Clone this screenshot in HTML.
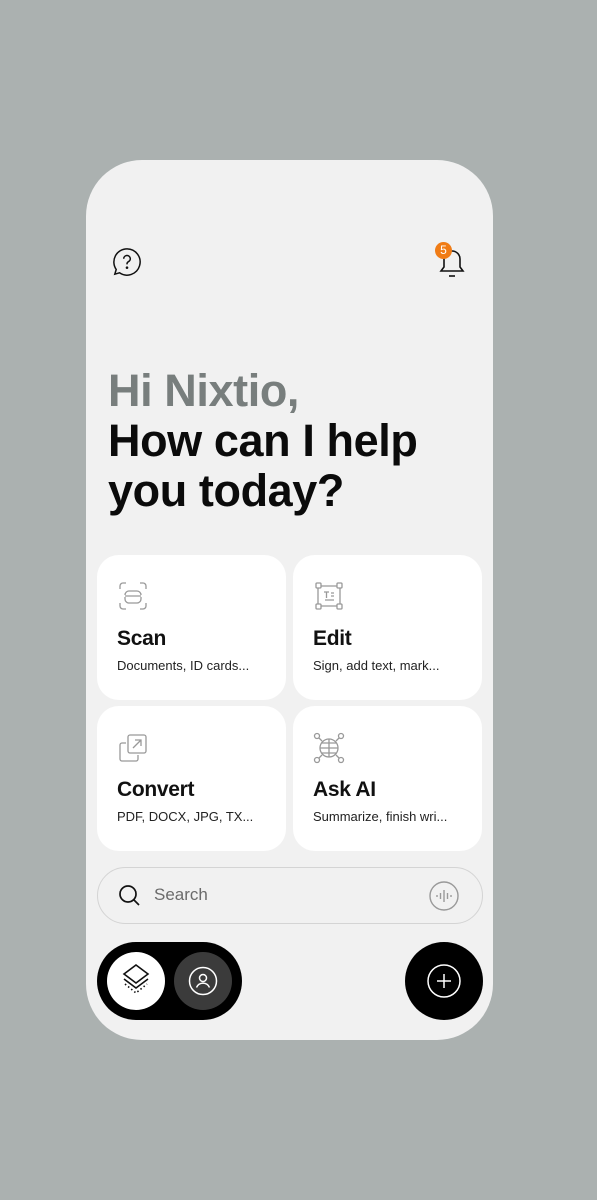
<!DOCTYPE html>
<html><head><style>
*{margin:0;padding:0;box-sizing:border-box}
body{width:597px;height:1200px;background:#abb1b0;font-family:"Liberation Sans",sans-serif;position:relative;overflow:hidden}
.phone{position:absolute;left:86px;top:160px;width:407px;height:880px;background:#f1f1f1;border-radius:56px}
.abs{position:absolute}
h1{position:absolute;left:108px;top:366px;font-size:45px;line-height:50px;font-weight:700;letter-spacing:-0.4px;color:#0b0b0b}
h1 span{color:#787e7d}
.card{position:absolute;width:189px;height:145px;background:#fff;border-radius:22px}
.card .t{position:absolute;left:20px;top:72px;font-size:21px;font-weight:700;letter-spacing:-0.3px;color:#111}
.card .s{position:absolute;left:20px;top:103px;font-size:13px;color:#222}
.card svg{position:absolute;left:20px;top:26px}
</style></head><body>
<div class="phone"></div>
<svg class="abs" style="left:112px;top:247px" width="30" height="30" viewBox="0 0 32 32" fill="none" stroke="#111" stroke-width="1.6"><path d="M16 2a14 14 0 1 1-8 25.5L3 29l1.5-5A14 14 0 0 1 16 2z"/><path d="M12.5 12.5a3.5 3.5 0 1 1 5 3.2c-1 .5-1.5 1.2-1.5 2.3v.5"/><circle cx="16" cy="22" r=".6" fill="#111"/></svg>
<svg class="abs" style="left:437px;top:244px" width="30" height="34" viewBox="0 0 30 34" fill="none" stroke="#111" stroke-width="1.6"><path d="M4 27h22l-3-4v-8a8 8 0 0 0-16 0v8z"/><path d="M12 32h6"/></svg>
<div class="abs" style="left:435px;top:242px;width:17px;height:17px;border-radius:50%;background:#f07c16;color:#fff;font-size:12px;text-align:center;line-height:17px">5</div>
<h1><span>Hi Nixtio,</span><br>How can I help<br>you today?</h1>

<div class="card" style="left:97px;top:555px">
<svg width="32" height="30" viewBox="0 0 32 30" fill="none" stroke="#999" stroke-width="1.3"><path d="M3 8V5a3 3 0 0 1 3-3h3M23 2h3a3 3 0 0 1 3 3v3M3 22v3a3 3 0 0 0 3 3h3M23 28h3a3 3 0 0 0 3-3v-3"/><path d="M8 14a4 4 0 0 1 4-4h8a4 4 0 0 1 4 4M8 15h16M8 16v2a4 4 0 0 0 4 4h8a4 4 0 0 0 4-4v-2"/></svg>
<div class="t">Scan</div><div class="s">Documents, ID cards...</div></div>
<div class="card" style="left:293px;top:555px">
<svg width="32" height="30" viewBox="0 0 32 30" fill="none" stroke="#999" stroke-width="1.3"><rect x="3" y="2" width="5" height="5" rx="1"/><rect x="24" y="2" width="5" height="5" rx="1"/><rect x="3" y="23" width="5" height="5" rx="1"/><rect x="24" y="23" width="5" height="5" rx="1"/><path d="M8 5h16M8 25h16M5 7v16M27 7v16M11 11h5M13.5 11v6M18 12h3M18 15h3M12 19h9"/></svg>
<div class="t">Edit</div><div class="s">Sign, add text, mark...</div></div>
<div class="card" style="left:97px;top:706px">
<svg width="32" height="32" viewBox="0 0 32 32" fill="none" stroke="#999" stroke-width="1.3"><path d="M9 11H5a2 2 0 0 0-2 2v14a2 2 0 0 0 2 2h14a2 2 0 0 0 2-2v-4"/><rect x="11" y="3" width="18" height="18" rx="2"/><path d="M16 16l8-8M18 8h6v6"/></svg>
<div class="t">Convert</div><div class="s">PDF, DOCX, JPG, TX...</div></div>
<div class="card" style="left:293px;top:706px">
<svg width="32" height="32" viewBox="0 0 32 32" fill="none" stroke="#999" stroke-width="1.3"><circle cx="16" cy="16" r="9"/><path d="M7 16h18M16 7v18M9 11h14M9 21h14"/><circle cx="4" cy="4" r="2.5"/><circle cx="28" cy="4" r="2.5"/><circle cx="4" cy="28" r="2.5"/><circle cx="28" cy="28" r="2.5"/><path d="M6 6l3 3M26 6l-3 3M6 26l3-3M26 26l-3-3"/></svg>
<div class="t">Ask AI</div><div class="s">Summarize, finish wri...</div></div>

<div class="abs" style="left:97px;top:867px;width:386px;height:57px;border:1px solid #d4d4d4;border-radius:29px"></div>
<svg class="abs" style="left:118px;top:884px" width="24" height="24" viewBox="0 0 24 24" fill="none" stroke="#111" stroke-width="1.7"><circle cx="10" cy="10" r="8"/><path d="M16 16l5 5"/></svg>
<div class="abs" style="left:154px;top:885px;font-size:17px;color:#6b6b6b">Search</div>
<svg class="abs" style="left:429px;top:881px" width="30" height="30" viewBox="0 0 30 30" fill="none" stroke="#999" stroke-width="1.4"><circle cx="15" cy="15" r="14"/><path d="M8 14v2M11.5 12v6M15 9v12M18.5 12v6M22 14v2"/></svg>

<div class="abs" style="left:97px;top:942px;width:145px;height:78px;background:#000;border-radius:39px"></div>
<div class="abs" style="left:107px;top:952px;width:58px;height:58px;background:#fff;border-radius:50%"></div>
<svg class="abs" style="left:120px;top:963px" width="32" height="34" viewBox="0 0 32 34" fill="none" stroke="#111" stroke-width="1.6"><path d="M16 2l12 9-12 9-12-9z"/><path d="M4 16l12 9 12-9"/><path d="M5 21l11 9 11-9" stroke-dasharray="1.5 2.5"/></svg>
<div class="abs" style="left:174px;top:952px;width:58px;height:58px;background:#3b3b3b;border-radius:50%"></div>
<svg class="abs" style="left:188px;top:966px" width="30" height="30" viewBox="0 0 30 30" fill="none" stroke="#fff" stroke-width="1.5"><circle cx="15" cy="15" r="13.5"/><circle cx="15" cy="12" r="3.5"/><path d="M8.5 21.5a7 7 0 0 1 13 0"/></svg>
<div class="abs" style="left:405px;top:942px;width:78px;height:78px;background:#000;border-radius:50%"></div>
<svg class="abs" style="left:427px;top:964px" width="34" height="34" viewBox="0 0 34 34" fill="none" stroke="#fff" stroke-width="1.5"><circle cx="17" cy="17" r="16"/><path d="M17 10v14M10 17h14"/></svg>
</body></html>
